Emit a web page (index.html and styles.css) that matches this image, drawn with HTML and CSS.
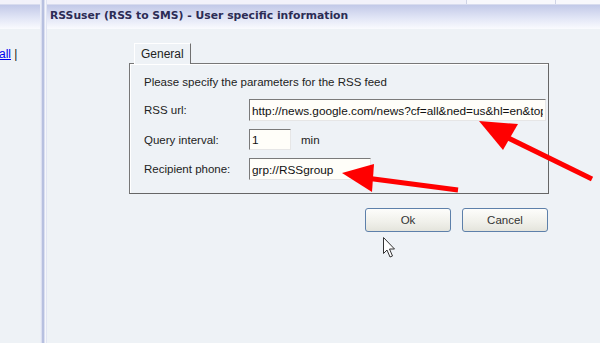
FILE: index.html
```html
<!DOCTYPE html>
<html lang="en">
<head>
    <meta charset="UTF-8">
    <title>RSSuser</title>
    <link rel="stylesheet" href="styles.css">
</head>
<body>
    <div class="app">
        <div class="side-panel">
            <div class="panel-top"></div>
            <div class="panel-header"></div>
            <div class="side-body"><a href="#">all</a> |</div>
        </div>
        <div class="splitter"></div>
        <div class="main-panel">
            <div class="panel-top">
                <span class="top-cell"></span>
                <span class="top-cell last"></span>
            </div>
            <div class="panel-header title">RSSuser (RSS to SMS) - User specific information</div>
            <div class="main-body">
                <div class="dialog">
                    <div class="tabs"><span class="tab">General</span></div>
                    <div class="tab-page">
                        <p class="intro">Please specify the parameters for the RSS feed</p>
                        <div class="form-row">
                            <label>RSS url:</label>
                            <input class="field wide" type="text" value="http://news.google.com/news?cf=all&amp;ned=us&amp;hl=en&amp;topic=h&amp;output=rss">
                        </div>
                        <div class="form-row">
                            <label>Query interval:</label>
                            <input class="field small" type="text" value="1">
                            <span class="unit">min</span>
                        </div>
                        <div class="form-row">
                            <label>Recipient phone:</label>
                            <input class="field medium" type="text" value="grp://RSSgroup">
                        </div>
                    </div>
                    <div class="actions">
                        <button class="btn">Ok</button>
                        <button class="btn">Cancel</button>
                    </div>
                </div>
            </div>
        </div>

        <!-- annotation arrows drawn over the screenshot -->
        <svg class="overlay" width="600" height="343" viewBox="0 0 600 343">
            <g fill="#ff0000" stroke="none">
                <line x1="592" y1="179" x2="498" y2="133" stroke="#ff0000" stroke-width="5"/>
                <polygon points="479,121 518,124 503,150"/>
                <line x1="458" y1="190" x2="366" y2="178" stroke="#ff0000" stroke-width="5"/>
                <polygon points="342,173 374,164 372,192"/>
            </g>
            <path d="M383.5 237.5 L383.5 253.5 L387 250 L390 257 L392.5 256 L389.5 249 L394.5 249 Z" fill="#fff" stroke="#333" stroke-width="1"/>
        </svg>
    </div>
</body>
</html>
```

FILE: styles.css
```css
html, body {
    margin: 0;
    padding: 0;
}

body {
    font-family: "Liberation Sans", Arial, sans-serif;
    font-size: 11px;
    color: #222;
    background: #eef2f6;
    overflow: hidden;
}

.app {
    position: relative;
    display: flex;
    width: 600px;
    height: 343px;
}

.side-panel {
    width: 40px;
    display: flex;
    flex-direction: column;
    overflow: hidden;
}

.main-panel {
    flex: 1;
    display: flex;
    flex-direction: column;
}

.panel-top {
    height: 4px;
    background: #f2f2fa;
    border-bottom: 1px solid #d8dcee;
    display: flex;
    justify-content: flex-end;
}

.top-cell {
    width: 88px;
    border-left: 1px solid #d0d4e6;
    background: #f8f8fc;
}

.top-cell.last {
    width: 44px;
}

.panel-header {
    height: 24px;
    background: linear-gradient(#c2c9e8, #e2e6f6 55%, #fafbfe);
}

.title {
    font-family: "DejaVu Sans", Verdana, sans-serif;
    font-weight: bold;
    font-size: 10.8px;
    color: #2c2c55;
    line-height: 22px;
    padding-left: 3px;
}

.side-body {
    flex: 1;
    padding-top: 18px;
    margin-left: -1px;
    font-size: 12px;
}

.side-body a {
    color: #0000ee;
}

.splitter {
    width: 7px;
    background: linear-gradient(90deg, #d6dcf0 0, #fff 1px, #b7c0e0 2px, #b7c0e0 4px, #fff 5px, #d6dcf0 7px);
}

.main-body {
    flex: 1;
    padding: 14px 0 0 82px;
}

.dialog {
    width: 420px;
}

.tabs {
    display: flex;
    padding-left: 5px;
    margin-bottom: -1px;
}

.tab {
    position: relative;
    padding: 3px 6px 3px 6px;
    font-size: 12px;
    border: 1px solid #fff;
    border-right: 1px solid #707070;
    border-bottom: none;
    background: #eef2f6;
    z-index: 1;
}

.tab-page {
    height: 131px;
    border: 1px solid #777;
    border-right-color: #666;
    border-bottom-color: #666;
    box-shadow: inset 1px 1px 0 #fff;
    padding: 0 0 0 14px;
    box-sizing: border-box;
}

.intro {
    margin: 12px 0 11px;
    font-size: 11.5px;
}

.form-row {
    display: flex;
    align-items: center;
    margin-bottom: 8px;
}

.form-row label {
    width: 105px;
    font-size: 11.5px;
}

.field {
    height: 22px;
    box-sizing: border-box;
    border: 1px solid;
    border-color: #7a7a7a #e6e6e6 #e6e6e6 #7a7a7a;
    background: #fffef9;
    font-family: "Liberation Sans", Arial, sans-serif;
    font-size: 11.8px;
    padding: 1px 2px 0;
    color: #111;
}

.wide {
    width: 297px;
}

.small {
    width: 42px;
    height: 21px;
}

.medium {
    width: 122px;
}

.unit {
    margin-left: 10px;
    font-size: 11.5px;
}

.actions {
    display: flex;
    justify-content: flex-end;
    gap: 11px;
    margin-top: 14px;
    padding-right: 1px;
}

.btn {
    width: 86px;
    height: 24px;
    border: 1px solid #5d80aa;
    border-radius: 3px;
    background: linear-gradient(#fdfdfb, #f0f0ea 60%, #e4e4dc);
    font-family: "Liberation Sans", Arial, sans-serif;
    font-size: 11.5px;
    color: #333;
}

.overlay {
    position: absolute;
    left: 0;
    top: 0;
    pointer-events: none;
}
```
